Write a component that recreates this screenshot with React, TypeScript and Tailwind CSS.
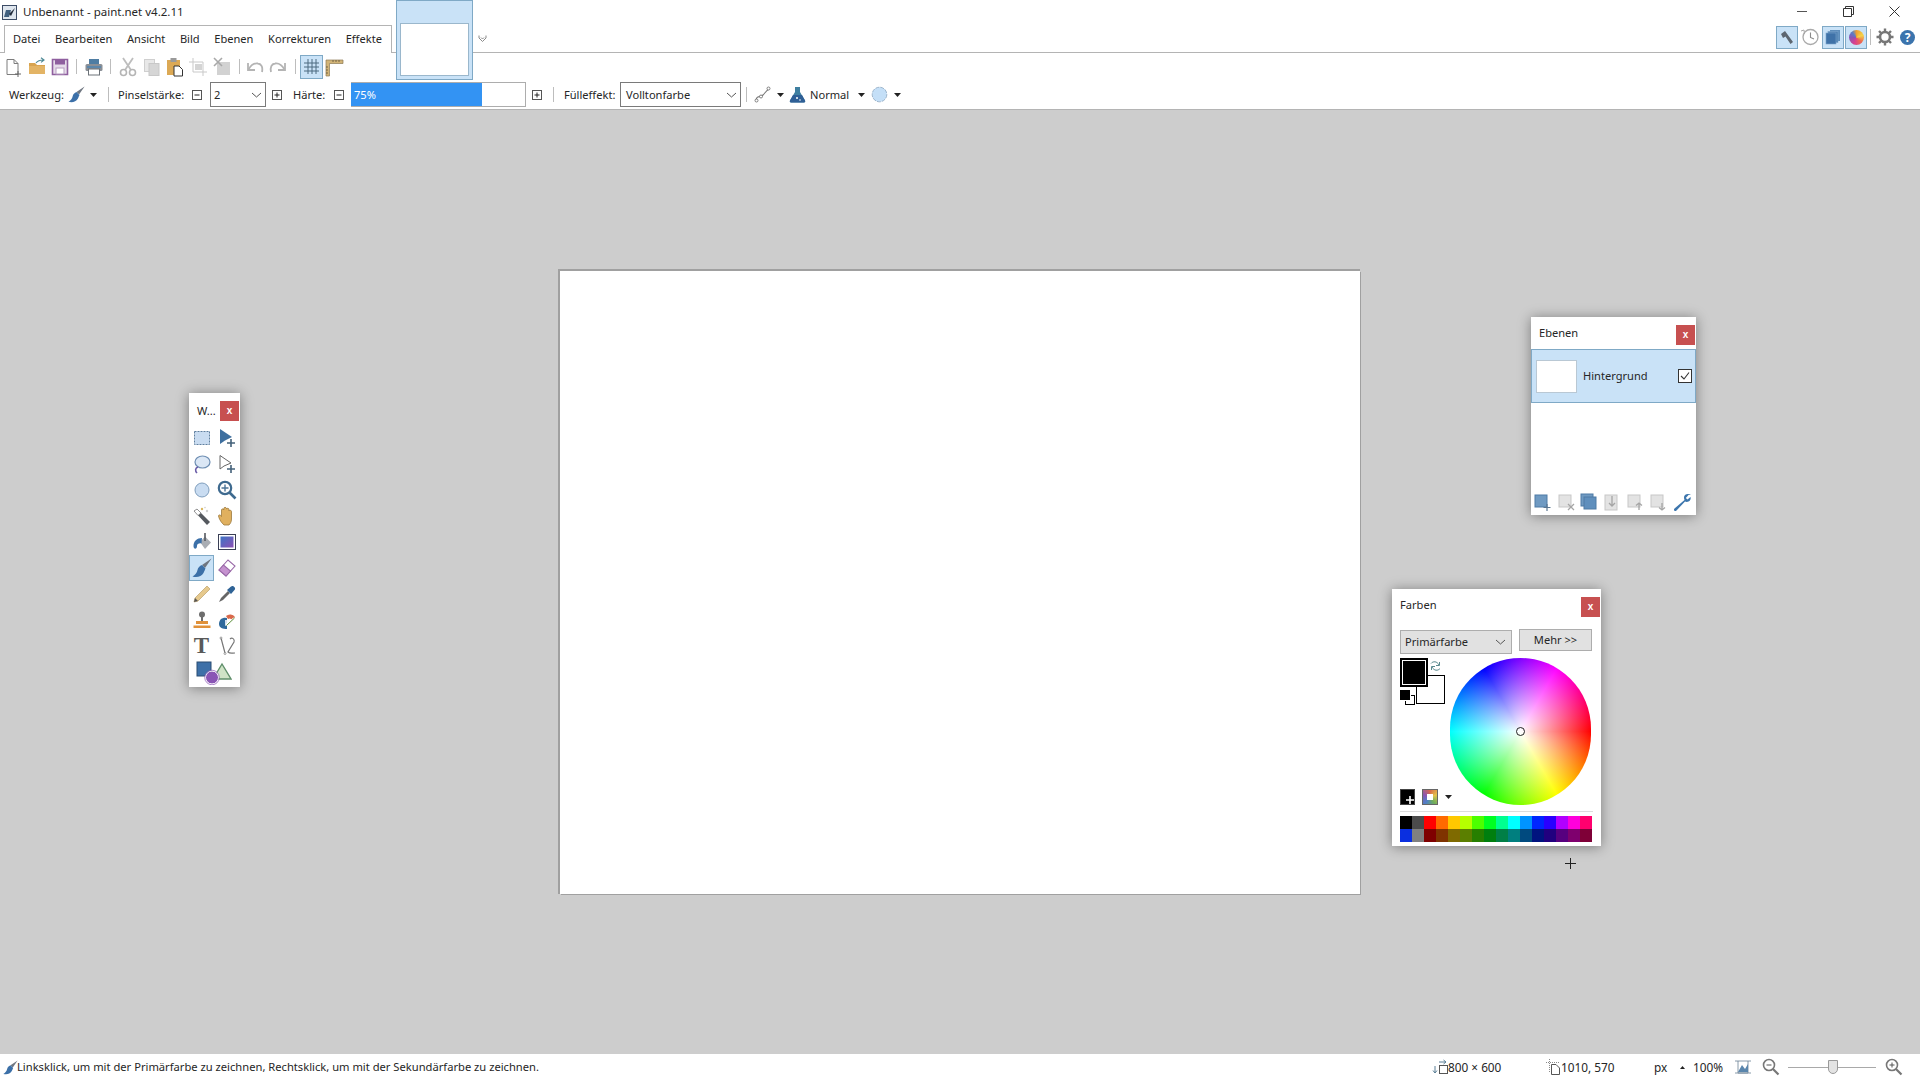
import React from "react";

const Svg = ({ s = 20, children, className = "" }: { s?: number; children?: React.ReactNode; className?: string }) => (
  <svg width={s} height={s} viewBox="0 0 20 20" fill="none" className={"shrink-0 " + className}>{children}</svg>
);

const BrushIcon = ({ s = 20 }: { s?: number }) => (
  <Svg s={s}>
    <path d="M19.5 .5 L10 7 L13 10 Z" fill="#6f7680" />
    <path d="M10 7 C7.5 8 6 9.5 5.5 12 C5 15 3 17 .5 18.5 C5 20 9.5 18.5 11.5 15 C12.5 13 13 11.5 13.5 10.5 Z" fill="#3c70a8" />
  </Svg>
);

const Tri = ({ className = "" }: { className?: string }) => (
  <svg width="7" height="4" viewBox="0 0 7 4" className={"shrink-0 " + className}><path d="M0 0H7L3.5 4Z" fill="#222" /></svg>
);

const Chevron = () => (
  <svg width="11" height="6" viewBox="0 0 11 6" fill="none" className="shrink-0"><path d="M1 1L5.5 5L10 1" stroke="#555" strokeWidth="1" /></svg>
);

const BoxBtn = ({ plus = false }: { plus?: boolean }) => (
  <svg width="10" height="10" viewBox="0 0 10 10" fill="none" className="shrink-0">
    <rect x=".5" y=".5" width="9" height="9" stroke="#555" />
    <path d={plus ? "M2.5 5H7.5M5 2.5V7.5" : "M2.5 5H7.5"} stroke="#222" />
  </svg>
);

const Sep = ({ className = "" }: { className?: string }) => <div className={"w-px h-[15px] bg-[#bdbdbd] shrink-0 " + className} />;

/* ---------- toolbar icons ---------- */
const NewIcon = () => (
  <Svg>
    <path d="M4 2.5H11L15 6.5V17.5H4Z" fill="#fff" stroke="#7d7d7d" />
    <path d="M11 2.5V6.5H15" stroke="#7d7d7d" />
    <path d="M15 14V20M12 17H18" stroke="#666" />
  </Svg>
);
const OpenIcon = () => (
  <Svg>
    <path d="M2 6H8L10 8H18V17H2Z" fill="#d8a450" />
    <path d="M2 9H18V17H2Z" fill="#e3b465" />
    <path d="M9 6C11 3.5 13 3 16 3M14 .8L17 3L14 5.4" stroke="#4f8a96" strokeWidth="1.2" />
  </Svg>
);
const SaveIcon = () => (
  <Svg>
    <path d="M2.5 2.5H17.5V17.5H2.5Z" fill="#e6dcea" stroke="#8f5f9f" strokeWidth="1.6" />
    <rect x="5" y="2.5" width="10" height="5" fill="#8f5f9f" />
    <rect x="6" y="11" width="8" height="6" fill="#fff" stroke="#b59cc0" />
  </Svg>
);
const PrintIcon = () => (
  <Svg>
    <rect x="5" y="2" width="10" height="5" fill="#4f7da3" />
    <rect x="1.5" y="7" width="17" height="7" rx="1.5" fill="#8a8f96" />
    <rect x="4.5" y="12" width="11" height="6" fill="#fff" stroke="#6c7278" />
    <rect x="3" y="9" width="14" height="2" fill="#5c87ab" />
  </Svg>
);
const CutIcon = () => (
  <Svg>
    <path d="M5 1L13 13M15 1L7 13" stroke="#bdbdbd" strokeWidth="1.8" />
    <circle cx="5.5" cy="15.5" r="3" stroke="#b5b5b5" strokeWidth="1.6" />
    <circle cx="14.5" cy="15.5" r="3" stroke="#b5b5b5" strokeWidth="1.6" />
  </Svg>
);
const CopyIcon = () => (
  <Svg>
    <rect x="2.5" y="2.5" width="10" height="12" fill="#e8e8e8" stroke="#cfcfcf" />
    <rect x="7" y="6.5" width="10" height="12" fill="#d6d6d6" stroke="#c8c8c8" />
  </Svg>
);
const PasteIcon = () => (
  <Svg>
    <rect x="2" y="3" width="13" height="15" fill="#dca955" />
    <rect x="5.5" y="1" width="6" height="4" fill="#9a9a9a" />
    <path d="M9 9H14L17.5 12.5V19H9Z" fill="#fff" stroke="#333" />
  </Svg>
);
const CropIcon = () => (
  <Svg>
    <path d="M5 1V15H19M1 5H15V19" stroke="#c9c9c9" />
    <rect x="7" y="7" width="7" height="6" fill="#d4d4d4" />
  </Svg>
);
const DelIcon = () => (
  <Svg>
    <rect x="5" y="5" width="13" height="13" fill="#d2d2d2" />
    <path d="M2 1L10 9M10 1L2 9" stroke="#a8a8a8" strokeWidth="1.6" />
  </Svg>
);
const UndoIcon = ({ flip = false }: { flip?: boolean }) => (
  <Svg className={flip ? "-scale-x-100" : ""}>
    <path d="M3 6V13H10" stroke="#b4b4b4" strokeWidth="1.8" />
    <path d="M3.5 12.5C6 8 10 6 13 6.5C16.5 7 18 10 17 15" stroke="#b4b4b4" strokeWidth="1.8" />
  </Svg>
);
const GridIcon = () => (
  <div className="w-[23px] h-[24px] flex items-center justify-center bg-[#c9e2f7] border border-[#7fa9c6] shrink-0">
    <svg width="17" height="17" viewBox="0 0 17 17" fill="none"><path d="M1 5H16M1 9H16M1 13H16M5 1V16M9 1V16M13 1V16" stroke="#4c6a80" /></svg>
  </div>
);
const RulerIcon = () => (
  <Svg>
    <path d="M1 3H18V6.5H4.5V19H1Z" fill="#d2b477" stroke="#8d7a55" strokeWidth=".7" />
    <path d="M8 3V5M11 3V5M14 3V5M1 10H3M1 13H3M1 16H3" stroke="#5d5138" strokeWidth=".8" />
  </Svg>
);

/* ---------- tool window icons ---------- */
const MoveMark = ({ x = 13, y = 14 }: { x?: number; y?: number }) => (
  <path d={`M${x} ${y - 4}V${y + 4}M${x - 4} ${y}H${x + 4}`} stroke="#44617a" strokeWidth="1.6" />
);
const toolIcons: React.ReactNode[] = [
  <Svg key="a"><rect x="2.5" y="3.5" width="15" height="13" fill="#c9dcf1" stroke="#5f7f9f" strokeDasharray="2 1" /></Svg>,
  <Svg key="b"><path d="M3 1V16L8 12.5L15 9Z" fill="#3e6f9f" /><MoveMark x={14} y={15} /></Svg>,
  <Svg key="c"><ellipse cx="10.5" cy="8" rx="7.5" ry="6" fill="#dbe7f5" stroke="#6f8fb3" strokeWidth="1.2" /><path d="M6 13C3 14 3 17 5 19" stroke="#6a5ca8" strokeWidth="1.6" /></Svg>,
  <Svg key="d"><path d="M3 1.5V15L7 12L14 9Z" fill="#fff" stroke="#666" /><MoveMark x={14} y={15} /></Svg>,
  <Svg key="e"><circle cx="10" cy="10" r="7" fill="#c9dcf1" stroke="#7f9ebd" /></Svg>,
  <Svg key="f"><circle cx="8" cy="8" r="6.2" fill="#fff" stroke="#3e6a8f" strokeWidth="2.2" /><path d="M12.5 12.5L18.5 18.5" stroke="#3e6a8f" strokeWidth="2.6" /><path d="M8 4.5V11.5M4.5 8H11.5" stroke="#4d7598" strokeWidth="1.4" /></Svg>,
  <Svg key="g"><path d="M2 5L5 3L18 16L15 19Z" fill="#55595f" /><path d="M2 5L5 3L9 7L6 9.5Z" fill="#fff" stroke="#666" strokeWidth=".6" /><circle cx="10" cy="3" r="1.2" fill="#d9b75f" /><circle cx="15" cy="5" r="1.2" fill="#cfcfcf" /><circle cx="13" cy="1.6" r=".8" fill="#cfcfcf" /></Svg>,
  <Svg key="h"><path d="M6 18C3 15 2 12 1.5 10C1.5 8.5 3.5 8.5 4.5 10.5V4C4.5 2.5 6.5 2.5 6.8 4V2.5C6.8 1 9.3 1 9.5 2.5V3C9.5 2 12 2 12 3.5V5C12 4 14.5 4 14.5 5.5V13C14.5 16 13 18 12 19H7Z" fill="#e0b05f" stroke="#9c7a3e" strokeWidth=".8" /></Svg>,
  <Svg key="i"><path d="M8 10L13 4.5L19 10.5L13 17Z" fill="#a9adb3" /><path d="M13 1V9" stroke="#55595f" strokeWidth="1.6" /><path d="M10 6C5 6 1.5 9 1.5 14C1.5 17.5 5 17.5 5 14C5 12 7 11 9.5 11.5Z" fill="#3c70a8" /></Svg>,
  <Svg key="j"><rect x="1.5" y="2.5" width="17" height="15" fill="#fff" stroke="#3a3f55" /><defs><linearGradient id="gr" x1="0" y1="0" x2="1" y2="1"><stop offset="0" stopColor="#3d74c5" /><stop offset="1" stopColor="#8d50b5" /></linearGradient></defs><rect x="3.5" y="4.5" width="13" height="11" fill="url(#gr)" /></Svg>,
  <BrushIcon key="k" />,
  <Svg key="l"><path d="M2 12L11 2L18 8L9 18Z" fill="#fff" stroke="#9a6aa8" strokeWidth="1.1" /><path d="M2 12L6.5 7L13.5 13L9 18Z" fill="#c592cf" stroke="#9a6aa8" strokeWidth="1.1" /></Svg>,
  <Svg key="m"><path d="M15 2L18 5L6 17L2 18L3 14Z" fill="#e6c98d" stroke="#bca06a" strokeWidth=".7" /><path d="M2 18L3 14L6 17Z" fill="#555" /></Svg>,
  <Svg key="n"><path d="M4 14L11 7L13 9L6 16L2 18Z" fill="#666" /><path d="M10 6L14 2.5C16 .5 19.5 4 17.5 6L14 10Z" fill="#2f6396" /></Svg>,
  <Svg key="o"><circle cx="10" cy="4.5" r="3" fill="#6e6e6e" /><rect x="9" y="7" width="2" height="4" fill="#6e6e6e" /><rect x="4" y="11" width="12" height="3" fill="#e0913a" /><rect x="1.5" y="15.5" width="17" height="2.5" fill="#e0913a" /></Svg>,
  <Svg key="p"><path d="M2 14A6 6 0 0 1 10 8V19C6 19 2 18 2 14Z" fill="#2f6a9c" /><path d="M9 6A6 6 0 0 1 18 7L15 10A3 3 0 0 0 11 9Z" fill="#d9694a" /><path d="M17 8L9 15M9 10V15H14" stroke="#fff" strokeWidth="1.6" /><path d="M17.5 8L9.5 15.5" stroke="#5c8f3a" strokeWidth="1" /></Svg>,
  <span key="q" className="font-['Liberation_Serif',serif] font-bold text-[23px] leading-[20px] text-[#595959]">T</span>,
  <Svg key="r"><path d="M4 2L8 17M13 3C15 1 18 3 17 6L11 16C13 18 15 17 18 17" stroke="#777" strokeWidth="1.2" /><circle cx="4" cy="2" r="1" fill="#fff" stroke="#666" strokeWidth=".6" /><circle cx="8" cy="17.5" r="1" fill="#fff" stroke="#666" strokeWidth=".6" /></Svg>,
];

const ShapesIcon = () => (
  <svg width="36" height="24" viewBox="0 0 36 24" fill="none" className="shrink-0">
    <path d="M26 3L35 18H17Z" fill="#cfe3c6" stroke="#5f8f6a" strokeWidth="1.4" />
    <rect x="1" y="1" width="14" height="14" fill="#3d70a8" stroke="#2b4d73" />
    <circle cx="16" cy="16.5" r="6.5" fill="#8a55b5" stroke="#fff" strokeWidth="1" />
    <circle cx="16" cy="16.5" r="7.3" stroke="#8a55b5" strokeWidth=".7" />
  </svg>
);

/* ---------- layer icons ---------- */
const LayerBtn = ({ kind }: { kind: number }) => {
  const grey = "#c7c7c7";
  const mark = "#a5a5a5";
  if (kind === 0)
    return <Svg><rect x="2" y="3" width="12" height="12" fill="#6f9ac2" stroke="#4e7ba5" /><path d="M14 12V19M10.5 15.5H17.5" stroke="#5b7690" strokeWidth="1.2" /></Svg>;
  if (kind === 2)
    return <Svg><rect x="2" y="2" width="12" height="12" fill="#6f9ac2" stroke="#4e7ba5" /><rect x="5" y="5" width="12" height="12" fill="#5f8fbd" stroke="#4e7ba5" /></Svg>;
  if (kind === 6)
    return <Svg><path d="M19 3C16 1 12.5 2 12 5C12 6 12 7 12.5 8L2.5 16.5C1 18 3 20 4.5 18.5L13 9.5C14 10 15.5 10 16.5 9.5C18.5 8.5 19 6.5 18.5 5L15.5 7.5L13.8 6L16.5 3Z" fill="#3d76ad" /></Svg>;
  const paths: Record<number, string> = { 1: "M12 12L18 18M18 12L12 18", 3: "M10 4V14M7 11L10 14L13 11", 4: "M14 18V11M11 13.5L14 11L17 13.5", 5: "M14 11V18M11 15.5L14 18L17 15.5" };
  return (
    <Svg>
      <rect x="3" y={3} width="12" height={kind === 3 ? 15 : 12} fill="#e3e3e3" stroke={grey} />
      <path d={paths[kind]} stroke={mark} strokeWidth="1.3" />
    </Svg>
  );
};

/* ---------- windows ---------- */
const CloseX = () => (
  <div className="w-[19px] h-[20px] bg-[#c75050] text-white text-[10px] font-bold leading-[19px] text-center shrink-0 font-['Liberation_Sans',sans-serif]">x</div>
);

const palette = [
  "bg-[#000000]", "bg-[#4b4b4b]", "bg-[#ff0000]", "bg-[#ff6a00]", "bg-[#ffc800]", "bg-[#b6ff00]", "bg-[#4cff00]", "bg-[#00ff21]",
  "bg-[#00ff90]", "bg-[#00ffff]", "bg-[#0094ff]", "bg-[#0026ff]", "bg-[#2a00ff]", "bg-[#b200ff]", "bg-[#ff00dc]", "bg-[#ff006e]",
  "bg-[#0a2fe0]", "bg-[#808080]", "bg-[#7f0000]", "bg-[#7f3300]", "bg-[#7f6a00]", "bg-[#5b7f00]", "bg-[#267f00]", "bg-[#007f0e]",
  "bg-[#007f46]", "bg-[#007f7f]", "bg-[#004a7f]", "bg-[#00137f]", "bg-[#21007f]", "bg-[#57007f]", "bg-[#7f006e]", "bg-[#7f0037]",
];

const menus = ["Datei", "Bearbeiten", "Ansicht", "Bild", "Ebenen", "Korrekturen", "Effekte"];

export default function App() {
  return (
    <div className="relative w-[1920px] h-[1080px] overflow-hidden flex flex-col bg-white text-[#262626] text-[11.1px] leading-[16px] font-['Noto_Sans',sans-serif]">
      {/* title bar */}
      <div className="h-[25px] flex items-center shrink-0">
        <svg width="15" height="15" viewBox="0 0 15 15" fill="none" className="ml-[2px] -mt-[1px] shrink-0">
          <rect x=".5" y=".5" width="14" height="14" fill="#dfe6ee" stroke="#3c4c66" />
          <path d="M2 12L4 5H9L7 12Z" fill="#41607f" />
          <path d="M13 3L7 9L9 11Z" fill="#222c3c" />
        </svg>
        <span className="ml-[6px] -mt-px text-[11.5px]">Unbenannt - paint.net v4.2.11</span>
        <div className="ml-auto flex items-center h-full">
          <div className="w-[10px] h-px bg-[#555] mr-[36px] -mt-[3px]" />
          <svg width="11" height="11" viewBox="0 0 11 11" fill="none" className="mr-[35px] -mt-[3px]"><path d="M.5 2.5H8.5V10.5H.5ZM2.5 2.5V.5H10.5V8.5H8.5" stroke="#333" /></svg>
          <svg width="11" height="11" viewBox="0 0 11 11" fill="none" className="mr-[20px] -mt-[3px]"><path d="M.5.5L10.5 10.5M10.5.5L.5 10.5" stroke="#333" /></svg>
        </div>
      </div>

      {/* tab row */}
      <div className="relative h-[28px] flex shrink-0 border-b border-[#b4b4b4]">
        <div className="ml-[4px] w-[388px] h-[28px] border border-b-0 border-[#b4b4b4] bg-white flex items-center pl-[0.7px] pb-px shrink-0">
          {menus.map((m) => (
            <span key={m} className="px-[7.3px] whitespace-nowrap">{m}</span>
          ))}
        </div>
        <svg width="9" height="9" viewBox="0 0 9 9" fill="none" className="ml-[86px] mt-[9px] shrink-0"><path d="M1 1.5V4L4.5 7.5L8 4V1.5" stroke="#8a8a8a" /><path d="M3 3.5L4.5 5L6 3.5" stroke="#8a8a8a" /></svg>
        <div className="ml-auto mr-[5px] flex items-center h-[28px] -mt-[2px]">
          <div className="w-[22px] h-[23px] bg-[#c9e2f7] border border-[#7fa9c6] flex items-center justify-center">
            <svg width="16" height="16" viewBox="0 0 16 16" fill="none"><path d="M2 5L6 2L14 13L11.5 15L6.5 7.5L4 9Z" fill="#5d6670" /></svg>
          </div>
          <Svg className="ml-[2px]"><circle cx="10.5" cy="10" r="7.5" fill="#fff" stroke="#a9a9a9" strokeWidth="1.3" /><path d="M10.5 5.5V10.5L14 12" stroke="#8a8a8a" strokeWidth="1.1" /><path d="M1 4L4 3L4.5 7" stroke="#a9a9a9" /></Svg>
          <div className="w-[22px] h-[23px] bg-[#c9e2f7] border border-[#7fa9c6] flex items-center justify-center ml-[2px]">
            <svg width="16" height="16" viewBox="0 0 16 16"><rect x="5" y="1" width="10" height="11" fill="#5d8dbb" /><rect x="3" y="2.5" width="10" height="11" fill="#4e7fb0" stroke="#7ba4cb" strokeWidth=".6" /><rect x="1" y="4" width="10" height="11" fill="#3f72a8" stroke="#7ba4cb" strokeWidth=".6" /></svg>
          </div>
          <div className="w-[22px] h-[23px] bg-[#c9e2f7] border border-[#7fa9c6] flex items-center justify-center ml-[1px]">
            <div className="w-[15px] h-[15px] rounded-full bg-[conic-gradient(#f0a030_0deg,#f4d34a_70deg,#ee6a50_130deg,#d9408f_200deg,#8a55b5_270deg,#5a7fc5_320deg,#f0a030_360deg)]" />
          </div>
          <Sep className="h-[16px] ml-[3px]" />
          <svg width="20" height="20" viewBox="0 0 20 20" fill="none" className="ml-[4px] shrink-0">
            <circle cx="10" cy="10" r="5" stroke="#777" strokeWidth="2.6" />
            <path d="M10 1.5V4.5M10 15.5V18.5M1.5 10H4.5M15.5 10H18.5M4 4L6 6M14 14L16 16M16 4L14 6M6 14L4 16" stroke="#777" strokeWidth="2.4" />
          </svg>
          <div className="ml-[5px] w-[15px] h-[15px] rounded-full bg-[#3b74ad] text-white font-bold text-[12px] leading-[15px] text-center">?</div>
        </div>
      </div>

      {/* toolbar */}
      <div className="h-[27px] flex items-center shrink-0 pl-[3px]">
        <span className="mr-[4px]"><NewIcon /></span>
        <span className="mr-[3px]"><OpenIcon /></span>
        <span className="mr-[6px]"><SaveIcon /></span>
        <Sep />
        <span className="ml-[7px] mr-[6px]"><PrintIcon /></span>
        <Sep />
        <span className="ml-[7px] mr-[4px]"><CutIcon /></span>
        <span className="mr-[3px]"><CopyIcon /></span>
        <span className="mr-[3px]"><PasteIcon /></span>
        <span className="mr-[4px]"><CropIcon /></span>
        <span className="mr-[7px]"><DelIcon /></span>
        <Sep />
        <span className="ml-[5px] mr-[3px]"><UndoIcon /></span>
        <UndoIcon flip />
        <Sep className="ml-[7px]" />
        <span className="ml-[4px] mr-[2px]"><GridIcon /></span>
        <RulerIcon />
      </div>

      {/* options bar */}
      <div className="h-[30px] flex items-center shrink-0 border-b border-[#b4b4b4] pl-[9px] whitespace-nowrap">
        <span className="w-[59px]">Werkzeug:</span>
        <BrushIcon s={17} />
        <Tri className="ml-[5px]" />
        <Sep className="ml-[11px]" />
        <span className="ml-[9px] w-[74px]">Pinselstärke:</span>
        <BoxBtn />
        <div className="ml-[8px] w-[56px] h-[25px] border border-[#7a7a7a] flex items-center justify-between pl-[3px] pr-[3px] shrink-0"><span>2</span><Chevron /></div>
        <span className="ml-[6px]"><BoxBtn plus /></span>
        <span className="ml-[11px] w-[41px]">Härte:</span>
        <BoxBtn />
        <div className="ml-[7px] w-[175px] h-[25px] border border-[#adadad] border-l-0 flex shrink-0">
          <div className="w-[131px] bg-[#3393f3] text-white flex items-center pl-[3px]">75%</div>
        </div>
        <span className="ml-[6px]"><BoxBtn plus /></span>
        <Sep className="ml-[11px]" />
        <span className="ml-[10px] w-[56px]">Fülleffekt:</span>
        <div className="w-[121px] h-[25px] border border-[#7a7a7a] flex items-center justify-between pl-[5px] pr-[3px] shrink-0"><span>Volltonfarbe</span><Chevron /></div>
        <Sep className="ml-[5px]" />
        <span className="ml-[7px]">
          <svg width="17" height="17" viewBox="0 0 17 17" fill="none"><path d="M2 15C2 9 6 12 9 9C11 7 12 5 15 3" stroke="#777" strokeWidth="1.1" /><circle cx="2.5" cy="14.5" r="1.5" fill="#fff" stroke="#666" strokeWidth=".8" /><circle cx="7" cy="10.5" r="1.5" fill="#fff" stroke="#666" strokeWidth=".8" /><circle cx="14.5" cy="2.5" r="1.5" fill="#fff" stroke="#666" strokeWidth=".8" /></svg>
        </span>
        <Tri className="ml-[6px]" />
        <svg width="17" height="17" viewBox="0 0 17 17" className="ml-[5px] shrink-0"><path d="M6 1H11V6L16 14.5C16.5 15.5 16 16.5 15 16.5H2C1 16.5 .5 15.5 1 14.5L6 6Z" fill="#3f7fa0" /><path d="M4 9H13L16 14.5C16.5 15.5 16 16.5 15 16.5H2C1 16.5 .5 15.5 1 14.5Z" fill="#2f5f96" /><circle cx="8" cy="12" r="1" fill="#fff" /><circle cx="11" cy="14" r=".8" fill="#fff" /></svg>
        <span className="ml-[4px] w-[48px]">Normal</span>
        <Tri />
        <svg width="17" height="17" viewBox="0 0 17 17" className="ml-[6px] shrink-0"><circle cx="8.5" cy="8.5" r="7.3" fill="#c4dff7" stroke="#8aa6bf" strokeWidth=".8" strokeDasharray="4 1" /></svg>
        <Tri className="ml-[6px]" />
      </div>

      {/* workspace */}
      <div className="flex-1 bg-[#cdcdcd] flex items-center justify-center">
        <div className="w-[800px] h-[623px] bg-white shadow-[-1px_-1px_0_1px_#a0a0a0,1px_1px_0_#a0a0a0]" />
      </div>

      {/* status bar */}
      <div className="h-[26px] flex items-center shrink-0 bg-white whitespace-nowrap pl-[3px] pr-[17px]">
        <BrushIcon s={15} />
        <span className="-ml-px text-[11.18px]">Linksklick, um mit der Primärfarbe zu zeichnen, Rechtsklick, um mit der Sekundärfarbe zu zeichnen.</span>
        <div className="ml-auto flex items-center text-[11.8px]">
          <span className="w-[114px] flex items-center">
            <svg width="16" height="16" viewBox="0 0 16 16" fill="none"><rect x="7.5" y="6.5" width="8" height="8" fill="#fff" stroke="#555" /><path d="M7 3H14M11.5 1L14 3L11.5 5" stroke="#5a7f96" /><path d="M3 7V14M1 11.5L3 14L5 11.5" stroke="#5a7f96" /></svg>
            800 × 600
          </span>
          <span className="w-[108px] flex items-center gap-px">
            <svg width="14" height="16" viewBox="0 0 14 16" fill="none"><path d="M5.5 5.5H10L13.5 9V15.5H5.5Z" fill="#fff" stroke="#555" /><path d="M0 3.5H13M3.5 0V14" stroke="#8a8a8a" strokeDasharray="1 1" /></svg>
            1010, 570
          </span>
          <span className="w-[26px]">px</span>
          <svg width="5" height="3" viewBox="0 0 5 3" className="shrink-0"><path d="M0 3L2.5 0L5 3Z" fill="#222" /></svg>
          <span className="ml-[8px] w-[42px]">100%</span>
          <svg width="16" height="16" viewBox="0 0 16 16" fill="none" className="shrink-0"><path d="M3 2V14H13V2M0 2H16M0 14H16" stroke="#6a8296" strokeWidth=".8" /><path d="M3 13L7 6L10 10L13 5V13Z" fill="#5a86ad" /></svg>
          <svg width="18" height="18" viewBox="0 0 18 18" fill="none" className="ml-[11px] shrink-0"><circle cx="7" cy="7" r="5.5" stroke="#777" strokeWidth="1.6" /><path d="M11 11L16.5 16.5" stroke="#777" strokeWidth="2.2" /><path d="M4.5 7H9.5" stroke="#555" /></svg>
          <div className="ml-[8px] w-[88px] h-[18px] flex items-center relative shrink-0">
            <div className="w-full h-px bg-[#a9a9a9]" />
            <div className="absolute left-[40px] top-[2px] w-[10px] h-[14px] bg-[#e3e3e3] border border-[#9a9a9a] rounded-b-[5px]" />
          </div>
          <svg width="18" height="18" viewBox="0 0 18 18" fill="none" className="ml-[9px] shrink-0"><circle cx="7" cy="7" r="5.5" stroke="#777" strokeWidth="1.6" /><path d="M11 11L16.5 16.5" stroke="#777" strokeWidth="2.2" /><path d="M4.5 7H9.5M7 4.5V9.5" stroke="#555" /></svg>
        </div>
      </div>

      {/* document thumbnail overlapping the tab strip */}
      <div className="absolute left-[396px] top-0 w-[77px] h-[80px] bg-[#c9e2f7] border border-[#7fa9c6] flex items-end justify-center pb-[3px]">
        <div className="w-[69px] h-[53px] bg-white border border-[#9ab7cc]" />
      </div>

      {/* tools window */}
      <div className="absolute left-[189px] top-[393px] w-[51px] h-[294px] bg-white shadow-[0_1px_12px_rgba(0,0,0,0.4)]">
        <div className="h-[32px] flex items-start pt-[8px] pl-[8px] justify-between pr-px">
          <span className="mt-[2px]">W...</span>
          <CloseX />
        </div>
        <div className="grid grid-cols-[25px_25px] auto-rows-[26px]">
          {toolIcons.map((ic, i) => (
            <div key={i} className={"flex items-center justify-center " + (i === 10 ? "bg-[#c9e2f7] border border-[#7fa9c6]" : "")}>{ic}</div>
          ))}
          <div className="col-span-2 flex items-center justify-center pt-[2px]"><ShapesIcon /></div>
        </div>
      </div>

      {/* layers window */}
      <div className="absolute left-[1531px] top-[317px] w-[165px] h-[198px] bg-white shadow-[0_1px_12px_rgba(0,0,0,0.4)] flex flex-col">
        <div className="h-[32px] flex items-start justify-between pt-[8px] pl-[8px] pr-px">
          <span>Ebenen</span>
          <CloseX />
        </div>
        <div className="h-[54px] bg-[#c9e2f7] border border-[#7fa9c6] flex items-center pl-[4px] pr-[3px]">
          <div className="w-[41px] h-[33px] bg-white border border-[#b9c8d4]" />
          <span className="ml-[6px]">Hintergrund</span>
          <div className="ml-auto w-[14px] h-[14px] bg-white border border-[#333] flex items-center justify-center">
            <svg width="10" height="10" viewBox="0 0 10 10" fill="none"><path d="M1 5L4 8L9 1.5" stroke="#333" strokeWidth="1.1" /></svg>
          </div>
        </div>
        <div className="flex-1" />
        <div className="h-[24px] flex items-center pl-[1.5px] gap-[3.2px] pb-[3px]">
          {[0, 1, 2, 3, 4, 5, 6].map((k) => <LayerBtn key={k} kind={k} />)}
        </div>
      </div>

      {/* colours window */}
      <div className="absolute left-[1392px] top-[589px] w-[209px] h-[257px] bg-white shadow-[0_1px_12px_rgba(0,0,0,0.4)] flex flex-col">
        <div className="h-[40px] flex items-start justify-between pt-[8px] pl-[8px] pr-px shrink-0">
          <span>Farben</span>
          <CloseX />
        </div>
        <div className="flex items-start pl-[8px] shrink-0">
          <div className="w-[112px] h-[24px] bg-[#e1e1e1] border border-[#adadad] flex items-center justify-between pl-[4px] pr-[5px] mt-px"><span>Primärfarbe</span><Chevron /></div>
          <div className="ml-[7px] w-[73px] h-[22px] bg-[#e1e1e1] border border-[#adadad] flex items-center justify-center">Mehr &gt;&gt;</div>
        </div>
        <div className="relative h-[157px] flex shrink-0">
          <div className="relative w-[128px] shrink-0">
            <div className="absolute left-[24px] top-[21px] w-[29px] h-[29px] bg-white border border-black" />
            <div className="absolute left-[8px] top-[4px] w-[28px] h-[29px] bg-black border-2 border-[#000] outline-1 outline-[#fff] -outline-offset-3" />
            <div className="absolute left-[13px] top-[41px] w-[10px] h-[10px] bg-white border border-black" />
            <div className="absolute left-[8px] top-[36px] w-[10px] h-[10px] bg-black outline-1 outline-white" />
            <svg width="11" height="12" viewBox="0 0 11 12" fill="none" className="absolute left-[38px] top-[6px]"><path d="M1 3.5C3 1 7 1 9 5M9.5 2V5.5H6M10 8.5C8 11 4 11 2 7M1.5 10V6.5H5" stroke="#5a8a8f" strokeWidth="1" /></svg>
          </div>
          <div className="mt-[4px] w-[141px] h-[147px] -ml-[70px] rounded-full relative shrink-0 bg-[radial-gradient(ellipse_closest-side,#ffffff_0%,#ffffff00_100%),conic-gradient(#8000ff_0deg,#ff00ff_30deg,#ff0000_90deg,#ffff00_150deg,#00ff00_210deg,#00ffff_270deg,#0000ff_330deg,#8000ff_360deg)] flex items-center justify-center">
            <div className="w-[9px] h-[9px] rounded-full border border-[#222] bg-white/40" />
          </div>
          <div className="absolute left-[8px] top-[135px] w-[15px] h-[16px] bg-black border border-[#444] flex items-end justify-end">
            <svg width="8" height="8" viewBox="0 0 8 8" fill="none"><path d="M4 0V8M0 4H8" stroke="#fff" strokeWidth="1.6" /></svg>
          </div>
          <div className="absolute left-[30px] top-[135px] w-[16px] h-[16px] border border-[#666] flex items-center justify-center bg-[conic-gradient(#d9694a,#e5c24a,#6fae5a,#4f7fc5,#8a55b5,#d9694a)]">
            <div className="w-[6px] h-[6px] bg-white" />
          </div>
          <Tri className="absolute left-[53px] top-[141px]" />
        </div>
        <div className="mx-[8px] h-px bg-[#dcdcdc] shrink-0" />
        <div className="mx-[8px] mt-[4px] grid grid-cols-[repeat(16,12px)] auto-rows-[13px] shrink-0">
          {palette.map((c, i) => <div key={i} className={c} />)}
        </div>
      </div>

      {/* mouse cursor */}
      <svg width="13" height="13" viewBox="0 0 13 13" fill="none" className="absolute left-[1564px] top-[857px]"><path d="M6.5 1V12M1 6.5H12" stroke="#222" strokeWidth="1" /></svg>
    </div>
  );
}
